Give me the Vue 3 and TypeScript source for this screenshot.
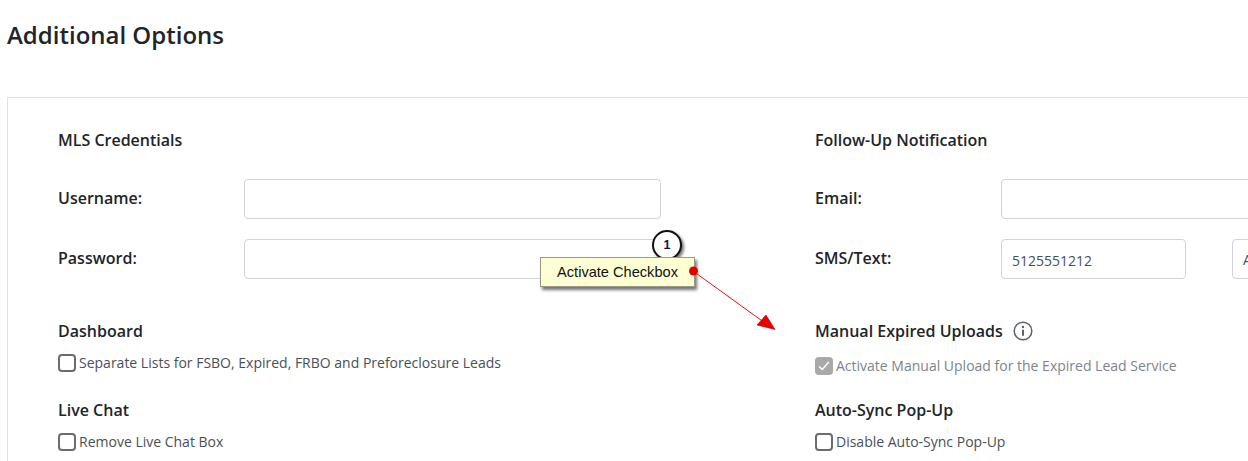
<template>
  <div class="page">
    <h1 class="title">Additional Options</h1>

    <div class="panel">
      <!-- left column -->
      <div class="col">
        <h2 class="head first">MLS Credentials</h2>
        <div class="field">
          <label class="field-label">Username:</label>
          <input class="input wide" type="text" />
        </div>
        <div class="field">
          <label class="field-label">Password:</label>
          <input class="input wide" type="text" />
        </div>

        <h2 class="head section">Dashboard</h2>
        <label class="check">
          <span class="box"></span>
          <span>Separate Lists for FSBO, Expired, FRBO and Preforeclosure Leads</span>
        </label>

        <h2 class="head next">Live Chat</h2>
        <label class="check">
          <span class="box"></span>
          <span>Remove Live Chat Box</span>
        </label>
      </div>

      <!-- right column -->
      <div class="col">
        <h2 class="head first">Follow-Up Notification</h2>
        <div class="field">
          <label class="field-label">Email:</label>
          <input class="input wide" type="text" />
        </div>
        <div class="field">
          <label class="field-label">SMS/Text:</label>
          <input class="input phone" type="text" value="5125551212" />
          <div class="input carrier">A</div>
        </div>

        <h2 class="head section with-icon">
          Manual Expired Uploads
          <svg class="info" width="20" height="20" viewBox="0 0 20 20" fill="none">
            <circle cx="10" cy="10" r="8.8" stroke="#5a6268" stroke-width="1.5" />
            <circle cx="10" cy="6" r="1.2" fill="#5a6268" />
            <path d="M10 8.800v6" stroke="#5a6268" stroke-width="2" />
          </svg>
        </h2>
        <label class="check disabled">
          <span class="box checked">
            <svg width="16" height="16" viewBox="0 0 16 16" fill="none">
              <path d="M2.500 8.500l3.500 3.500 7.500-8.500" stroke="#fff" stroke-width="1.700" />
            </svg>
          </span>
          <span>Activate Manual Upload for the Expired Lead Service</span>
        </label>

        <h2 class="head next tight">Auto-Sync Pop-Up</h2>
        <label class="check">
          <span class="box"></span>
          <span>Disable Auto-Sync Pop-Up</span>
        </label>
      </div>
    </div>

    <!-- annotation over the page -->
    <div class="badge">1</div>
    <div class="callout">Activate Checkbox</div>
    <svg class="arrow" width="1248" height="461" viewBox="0 0 1248 461">
      <path d="M693 271L765 323" stroke="#f01010" stroke-width="1" />
      <path d="M775 329.500L757 325L766 315Z" fill="#e80000" stroke="#a00" stroke-width="0.6" />
      <circle cx="693.500" cy="271" r="4.500" fill="#e00000" />
    </svg>
  </div>
</template>

<script setup lang="ts">
</script>

<style>
html,
body {
  margin: 0;
  background: #fff;
}
</style>

<style scoped>
.page {
  position: relative;
  width: 1248px;
  height: 461px;
  overflow: hidden;
  background: #fff;
  font-family: "Open Sans", "Noto Sans", sans-serif;
  color: #212529;
}

.title {
  margin: 0;
  padding: 18px 0 0 7px;
  height: 79px;
  box-sizing: border-box;
  font-size: 24px;
  line-height: 34px;
  font-weight: 600;
}

.panel {
  margin: 18px 0 0 7px;
  width: 1700px;
  box-sizing: border-box;
  border: 1px solid #dee2e6;
  padding: 30px 0 40px 50px;
  display: grid;
  grid-template-columns: 757px 757px;
}

.head {
  margin: 0;
  font-size: 16px;
  line-height: 24px;
  font-weight: 600;
}

.head.first {
  margin-bottom: 27px;
}

.head.section {
  margin-top: 40px;
}

.head.next {
  margin-top: 23px;
}

.head.next.tight {
  margin-top: 20px;
}

.head.with-icon {
  display: flex;
  align-items: center;
  gap: 10px;
}

.field {
  display: flex;
  align-items: center;
  height: 40px;
  margin-bottom: 20px;
}

.field:last-of-type {
  margin-bottom: 0;
}

.field-label {
  width: 186px;
  flex: none;
  font-size: 16px;
  font-weight: 600;
  position: relative;
  top: -1px;
}

.input {
  height: 40px;
  box-sizing: border-box;
  border: 1px solid #ced4da;
  border-radius: 4px;
  background: #fff;
  padding: 2px 10px 0;
  font-family: inherit;
  font-size: 14px;
  color: #495057;
  outline: none;
  flex: none;
}

.wide {
  width: 417px;
}

.phone {
  width: 185px;
}

.carrier {
  width: 200px;
  margin-left: 46px;
  line-height: 36px;
}

.check {
  display: flex;
  align-items: center;
  gap: 3px;
  margin-top: 8px;
  height: 24px;
  font-size: 14px;
  line-height: 24px;
  color: #495057;
}

.check.disabled {
  margin-top: 11px;
  color: #7d858c;
}

.box {
  width: 18px;
  height: 18px;
  box-sizing: border-box;
  border: 2px solid #6c6c6c;
  border-radius: 4px;
  background: #fff;
  flex: none;
  display: flex;
  align-items: center;
  justify-content: center;
}

.box.checked {
  background: #a9a9a9;
  border-color: #a9a9a9;
}

.arrow {
  position: absolute;
  left: 0;
  top: 0;
  pointer-events: none;
}

.badge {
  position: absolute;
  left: 652px;
  top: 230px;
  width: 30px;
  height: 30px;
  box-sizing: border-box;
  border: 2px solid #111;
  border-radius: 50%;
  background: #fff;
  box-shadow: 2px 2px 3px rgba(0, 0, 0, 0.55);
  text-align: center;
  font-family: "Liberation Sans", sans-serif;
  font-size: 12.5px;
  line-height: 26px;
  font-weight: 700;
  color: #10104a;
}

.callout {
  position: absolute;
  left: 540px;
  top: 257px;
  width: 155px;
  height: 30px;
  box-sizing: border-box;
  border: 1px solid #9a9a86;
  background: #ffffd4;
  box-shadow: 2px 3px 3px rgba(0, 0, 0, 0.55);
  text-align: center;
  font-family: "Liberation Sans", sans-serif;
  font-size: 14.6px;
  line-height: 28px;
  color: #111;
}
</style>
